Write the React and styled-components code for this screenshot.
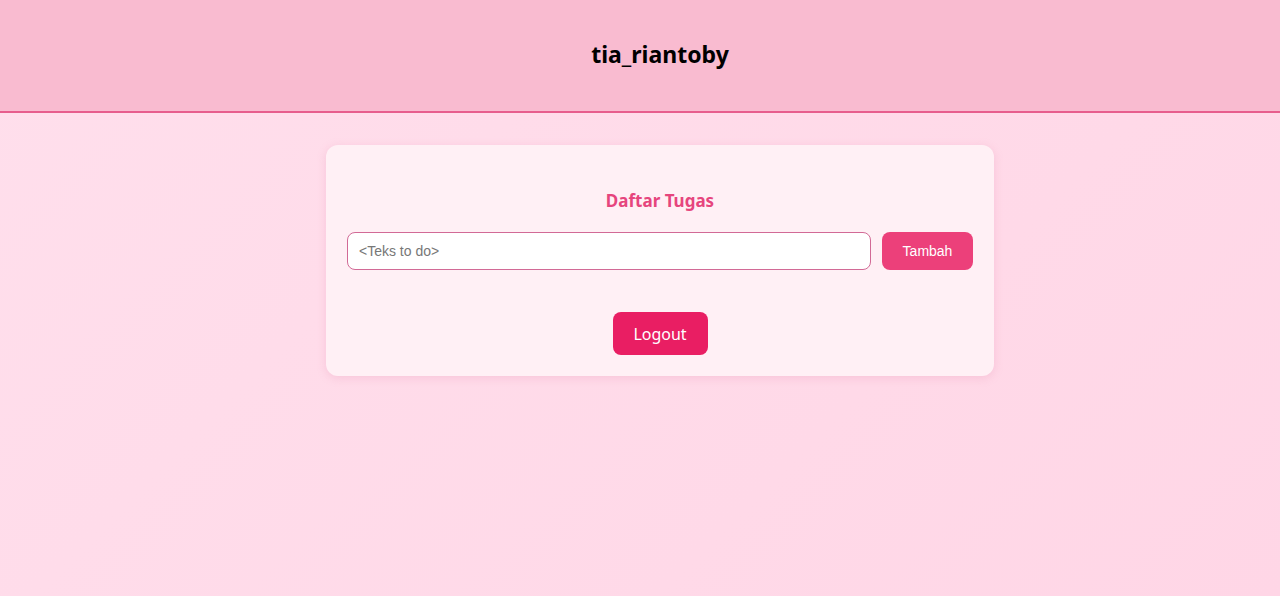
import styled, { createGlobalStyle } from "styled-components";

const GlobalStyle = createGlobalStyle`
  html, body {
    margin: 0;
    padding: 0;
  }
  body {
    min-height: 596px;
    background: linear-gradient(135deg, #ffdfec 0%, #ffd6e6 100%);
    font-family: "Noto Sans", "Open Sans", sans-serif;
  }
`

const Header = styled.header`
  height: 111px;
  padding-left: 40px;
  background: #f9bbd0;
  border-bottom: 2px solid #e75d8d;
  display: flex;
  align-items: center;
  justify-content: center;
`

const Brand = styled.h1`
  margin: 0 0 4px;
  font-size: 23px;
  font-weight: 700;
  color: #000;
`

const Main = styled.main`
  display: flex;
  justify-content: center;
  padding-top: 32px;
  padding-left: 40px;
`

const Card = styled.div`
  width: 668px;
  box-sizing: border-box;
  background: #fff0f5;
  border-radius: 12px;
  box-shadow: 0 2px 10px rgba(220, 120, 160, 0.22);
  padding: 42px 21px 21px;
  display: flex;
  flex-direction: column;
  align-items: center;
`

const Title = styled.h2`
  margin: 0 0 17px;
  font-size: 17px;
  line-height: 28px;
  font-weight: 700;
  color: #e6457d;
`

const Row = styled.div`
  width: 100%;
  display: flex;
  gap: 11px;
`

const Input = styled.input`
  flex: 1;
  height: 38px;
  box-sizing: border-box;
  border: 1px solid #d26a96;
  border-radius: 8px;
  padding: 0 11px;
  font-family: "Liberation Sans", Arial, sans-serif;
  font-size: 14px;
  color: #333;
  background: #fff;
  outline: none;
  &::placeholder {
    color: #777;
  }
`

const Button = styled.button`
  border: none;
  border-radius: 8px;
  color: #fff;
  cursor: pointer;
  background: ${(p) => (p.$strong ? "#e91e63" : "#ec407a")};
  font-family: ${(p) => (p.$strong ? `"Noto Sans", "Open Sans", sans-serif` : `"Liberation Sans", Arial, sans-serif`)};
  font-size: ${(p) => (p.$strong ? "16px" : "14px")};
  height: ${(p) => (p.$strong ? "43px" : "38px")};
  width: ${(p) => (p.$strong ? "95px" : "91px")};
  padding: 0;
`

const LogoutWrap = styled.div`
  margin-top: 42px;
`

export default function App() {
  return (
    <>
      <GlobalStyle />
      <Header>
        <Brand>tia_riantoby</Brand>
      </Header>
      <Main>
        <Card>
          <Title>Daftar Tugas</Title>
          <Row>
            <Input placeholder="<Teks to do>" />
            <Button>Tambah</Button>
          </Row>
          <LogoutWrap>
            <Button $strong>Logout</Button>
          </LogoutWrap>
        </Card>
      </Main>
    </>
  )
}
